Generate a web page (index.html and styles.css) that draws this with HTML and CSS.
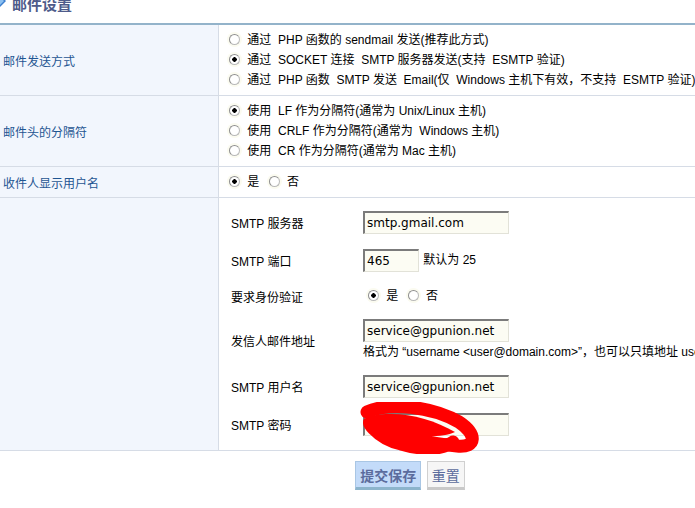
FILE: index.html
```html
<!DOCTYPE html>
<html lang="zh-CN">
<head>
  <meta charset="UTF-8" />
  <title>邮件设置</title>
  <link rel="stylesheet" href="styles.css">
</head>
<body>

<div class="page">
  <h3 class="title">
    <svg class="title-icon" width="12" height="12" viewBox="0 0 12 12"><path d="M6 0 L12 6 L6 12 L0 6 Z" fill="#3b7fd0"/><path d="M6 2 L10 6 L6 10 Z" fill="#8cc0f0"/></svg>
    邮件设置
  </h3>

  <table class="settings">
    <tr class="tall">
      <td class="label">邮件发送方式</td>
      <td class="value">
        <div class="opt"><input type="radio" name="mailer"> 通过&nbsp; PHP 函数的 sendmail 发送(推荐此方式)</div>
        <div class="opt"><input type="radio" name="mailer" checked> 通过&nbsp; SOCKET 连接&nbsp; SMTP 服务器发送(支持&nbsp; ESMTP 验证)</div>
        <div class="opt"><input type="radio" name="mailer"> 通过&nbsp; PHP 函数&nbsp; SMTP 发送&nbsp; Email(仅&nbsp; Windows 主机下有效，不支持&nbsp; ESMTP 验证)</div>
      </td>
    </tr>
    <tr class="tall">
      <td class="label">邮件头的分隔符</td>
      <td class="value">
        <div class="opt"><input type="radio" name="delim" checked> 使用&nbsp; LF 作为分隔符(通常为 Unix/Linux 主机)</div>
        <div class="opt"><input type="radio" name="delim"> 使用&nbsp; CRLF 作为分隔符(通常为&nbsp; Windows 主机)</div>
        <div class="opt"><input type="radio" name="delim"> 使用&nbsp; CR 作为分隔符(通常为 Mac 主机)</div>
      </td>
    </tr>
    <tr>
      <td class="label">收件人显示用户名</td>
      <td class="value short">
        <div class="opt"><input type="radio" name="showname" checked> 是 <input type="radio" name="showname" class="second"> 否</div>
      </td>
    </tr>
    <tr>
      <td class="label"></td>
      <td class="value smtp">
        <table class="inner">
          <tr>
            <td class="ilabel">SMTP 服务器</td>
            <td><input type="text" class="field" value="smtp.gmail.com"></td>
          </tr>
          <tr>
            <td class="ilabel">SMTP 端口</td>
            <td><input type="text" class="field port" value="465"> <span class="note">默认为 25</span></td>
          </tr>
          <tr class="auth">
            <td class="ilabel">要求身份验证</td>
            <td><div class="opt in"><input type="radio" name="auth" checked> 是 <input type="radio" name="auth" class="second"> 否</div></td>
          </tr>
          <tr class="sender">
            <td class="ilabel">发信人邮件地址</td>
            <td>
              <input type="text" class="field" value="service@gpunion.net">
              <div class="hint">格式为 “username &lt;user@domain.com&gt;”，也可以只填地址 user@domain.com</div>
            </td>
          </tr>
          <tr>
            <td class="ilabel">SMTP 用户名</td>
            <td><input type="text" class="field" value="service@gpunion.net"></td>
          </tr>
          <tr class="last">
            <td class="ilabel">SMTP 密码</td>
            <td class="secret">
              <input type="password" class="field" value="password">
              <svg class="scribble" width="124" height="52" viewBox="0 0 124 52">
                <path d="M8 10 C30 0, 72 4, 100 20 C118 32, 118 46, 98 44 C74 42, 34 34, 14 22 C4 14, 16 36, 42 42 C62 48, 84 48, 94 40" fill="none" stroke="#f00" stroke-width="13" stroke-linecap="round"/>
                <path d="M12 14 C40 8, 72 16, 96 30 C80 38, 40 34, 18 26 Z" fill="#f00"/>
                <path d="M20 30 C40 40, 70 44, 92 40" fill="none" stroke="#f00" stroke-width="9" stroke-linecap="round"/>
              </svg>
            </td>
          </tr>
        </table>
      </td>
    </tr>
  </table>

  <div class="actions">
    <button class="btn primary">提交保存</button>
    <button class="btn">重置</button>
  </div>
</div>

</body>
</html>
```

FILE: styles.css
```css
html,
body {
  margin: 0;
  padding: 0;
  overflow: hidden;
  background: #fff;
}

body {
  font-family: 'Liberation Sans', 'Noto Sans CJK SC', sans-serif;
  font-size: 12px;
  color: #000;
}

.page {
  width: 820px;
}

.title {
  margin: -5px 0 0;
  padding: 0 0 8px 12px;
  line-height: 20px;
  font-size: 15px;
  font-weight: bold;
  color: #4e5b8a;
  border-bottom: 2px solid #93b3ca;
  position: relative;
}

.title-icon {
  position: absolute;
  left: -6px;
  top: 0;
}

.settings {
  width: 100%;
  border-collapse: collapse;
  table-layout: fixed;
}

.settings > tbody > tr > td {
  border-bottom: 1px solid #d6dce6;
  padding: 0;
}

.label {
  width: 215px;
  padding-left: 3px !important;
  background: #f2f6fd;
  color: #1f5592;
  border-right: 1px solid #d6dce6;
  vertical-align: middle;
}

.value {
  padding: 5px 0 5px 10px !important;
  white-space: nowrap;
}

.tall td {
  height: 59px;
}

.value.short {
  height: 19px;
}

.opt {
  line-height: 20px;
  height: 20px;
}

input[type="radio"] {
  appearance: none;
  -webkit-appearance: none;
  width: 11px;
  height: 11px;
  margin: 0 4px 0 0;
  border: 1px solid #b9b9b9;
  border-top-color: #8e8e8e;
  border-left-color: #8e8e8e;
  border-radius: 50%;
  background: #fff;
  box-shadow: 0 0 0 2px #fbfbf0;
  vertical-align: -1px;
}

input[type="radio"]:checked {
  background: radial-gradient(circle, #000 0 2px, #fff 2.5px);
}

input[type="radio"].second {
  margin-left: 6px;
}

.value.smtp {
  padding: 6px 0 6px 12px !important;
}

.inner {
  border-collapse: collapse;
}

.inner td {
  padding: 7px 0 8px;
  vertical-align: middle;
  white-space: nowrap;
}

.inner .ilabel {
  width: 132px;
}

.inner .auth td {
  padding: 6px 0;
}

.inner .sender td {
  padding: 7px 0 6px;
}

.inner .last td {
  padding: 7px 0 8px;
}

.opt.in {
  padding-left: 5px;
}

.field {
  width: 139px;
  height: 18px;
  margin: 0;
  padding: 1px 2px;
  border: 1px solid #e2e2d8;
  border-top: 2px solid #7b7b7b;
  border-left: 2px solid #7b7b7b;
  background: #fcfcf3;
  font-family: 'DejaVu Sans', sans-serif;
  font-size: 12px;
  color: #000;
  vertical-align: middle;
}

.field.port {
  width: 49px;
}

.note {
  margin-left: 1px;
}

.hint {
  line-height: 20px;
  height: 20px;
}

.secret {
  position: relative;
}

.scribble {
  position: absolute;
  left: -4px;
  top: -4px;
}

.actions {
  width: 100%;
  text-align: center;
  margin-top: 10px;
}

.btn {
  height: 29px;
  padding: 0 4px;
  margin: 0 1px;
  border: 1px solid #d0d0d0;
  border-bottom: 3px solid #c9c9c9;
  background: #f6f6f6;
  font-family: 'Noto Sans CJK SC', sans-serif;
  font-size: 14px;
  color: #5b6c9d;
}

.btn.primary {
  border-color: #a9c6e4;
  border-bottom-color: #8cb4cc;
  background: #c3dbf9;
  font-weight: bold;
}
```
